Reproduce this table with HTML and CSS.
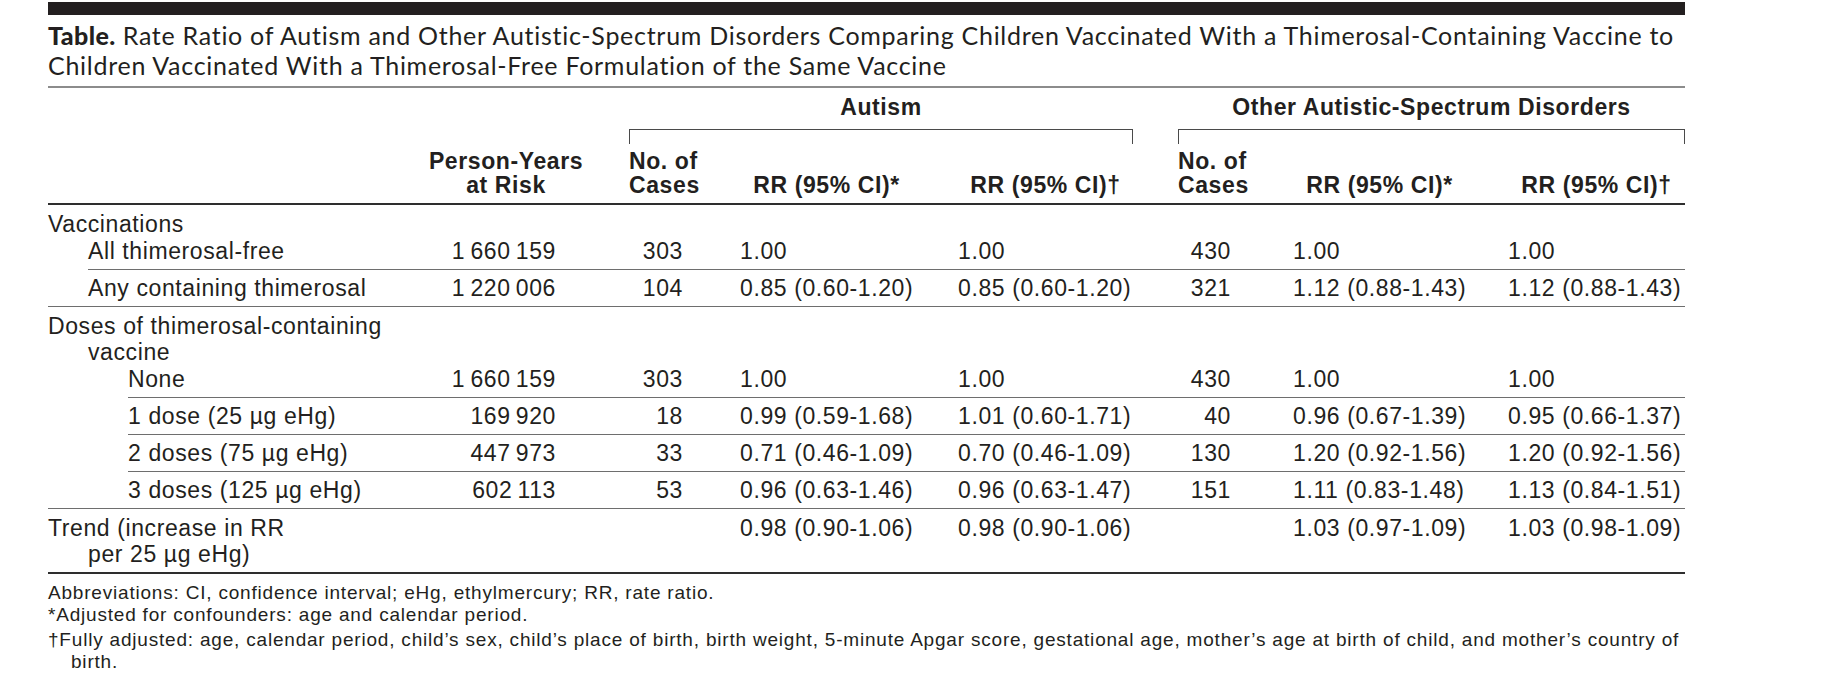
FILE: index.html
```html
<!DOCTYPE html>
<html lang="en">
<head>
<meta charset="utf-8">
<title>Table</title>
<link rel="stylesheet" href="styles.css">
</head>
<body>
<div class="page">
  <div class="topbar"></div>
  <div class="caption"><span class="cap-line"><b>Table.</b> Rate Ratio of Autism and Other Autistic-Spectrum Disorders Comparing Children Vaccinated With a Thimerosal-Containing Vaccine to</span><span class="cap-line">Children Vaccinated With a Thimerosal-Free Formulation of the Same Vaccine</span></div>
  <table class="data">
    <colgroup>
      <col class="w1"><col class="w2"><col class="w3"><col class="w4"><col class="w5"><col class="w6"><col class="w7"><col class="w8">
    </colgroup>
    <thead>
      <tr class="grp-row">
        <th></th><th></th>
        <th colspan="3" class="grp"><div class="grp-label">Autism</div><div class="bracket"></div></th>
        <th colspan="3" class="grp grp2"><div class="grp-label">Other Autistic-Spectrum Disorders</div><div class="bracket"></div></th>
      </tr>
      <tr class="col-row">
        <th class="c1"></th>
        <th class="c2 hc">Person-Years<br>at Risk</th>
        <th class="c3 hl">No. of<br>Cases</th>
        <th class="c4 hc">RR (95% CI)*</th>
        <th class="c5 hc">RR (95% CI)†</th>
        <th class="c6 hl">No. of<br>Cases</th>
        <th class="c7 hc">RR (95% CI)*</th>
        <th class="c8 hc">RR (95% CI)†</th>
      </tr>
    </thead>
    <tbody>
      <tr class="sec">
        <td class="c1 l0">Vaccinations</td><td></td><td></td><td></td><td></td><td></td><td></td><td></td>
      </tr>
      <tr class="after-sec rule-i1">
        <td class="c1 l1">All thimerosal-free</td>
        <td class="c2 num">1&#8201;660&#8201;159</td><td class="c3 num">303</td>
        <td class="c4">1.00</td><td class="c5">1.00</td>
        <td class="c6 num">430</td><td class="c7">1.00</td><td class="c8">1.00</td>
      </tr>
      <tr class="rule-full">
        <td class="c1 l1">Any containing thimerosal</td>
        <td class="c2 num">1&#8201;220&#8201;006</td><td class="c3 num">104</td>
        <td class="c4">0.85 (0.60-1.20)</td><td class="c5">0.85 (0.60-1.20)</td>
        <td class="c6 num">321</td><td class="c7">1.12 (0.88-1.43)</td><td class="c8">1.12 (0.88-1.43)</td>
      </tr>
      <tr class="sec">
        <td class="c1 l0 hang">Doses of thimerosal-containing<br>vaccine</td><td></td><td></td><td></td><td></td><td></td><td></td><td></td>
      </tr>
      <tr class="after-sec rule-i2">
        <td class="c1 l2">None</td>
        <td class="c2 num">1&#8201;660&#8201;159</td><td class="c3 num">303</td>
        <td class="c4">1.00</td><td class="c5">1.00</td>
        <td class="c6 num">430</td><td class="c7">1.00</td><td class="c8">1.00</td>
      </tr>
      <tr class="rule-i2">
        <td class="c1 l2">1 dose (25 µg eHg)</td>
        <td class="c2 num">169&#8201;920</td><td class="c3 num">18</td>
        <td class="c4">0.99 (0.59-1.68)</td><td class="c5">1.01 (0.60-1.71)</td>
        <td class="c6 num">40</td><td class="c7">0.96 (0.67-1.39)</td><td class="c8">0.95 (0.66-1.37)</td>
      </tr>
      <tr class="rule-i2">
        <td class="c1 l2">2 doses (75 µg eHg)</td>
        <td class="c2 num">447&#8201;973</td><td class="c3 num">33</td>
        <td class="c4">0.71 (0.46-1.09)</td><td class="c5">0.70 (0.46-1.09)</td>
        <td class="c6 num">130</td><td class="c7">1.20 (0.92-1.56)</td><td class="c8">1.20 (0.92-1.56)</td>
      </tr>
      <tr class="rule-full">
        <td class="c1 l2">3 doses (125 µg eHg)</td>
        <td class="c2 num">602&#8201;113</td><td class="c3 num">53</td>
        <td class="c4">0.96 (0.63-1.46)</td><td class="c5">0.96 (0.63-1.47)</td>
        <td class="c6 num">151</td><td class="c7">1.11 (0.83-1.48)</td><td class="c8">1.13 (0.84-1.51)</td>
      </tr>
      <tr class="rule-end trend">
        <td class="c1 l0 hang">Trend (increase in RR<br>per 25 µg eHg)</td>
        <td class="c2 num"></td><td class="c3 num"></td>
        <td class="c4">0.98 (0.90-1.06)</td><td class="c5">0.98 (0.90-1.06)</td>
        <td class="c6 num"></td><td class="c7">1.03 (0.97-1.09)</td><td class="c8">1.03 (0.98-1.09)</td>
      </tr>
    </tbody>
  </table>
  <div class="notes">
    <p class="note first">Abbreviations: CI, confidence interval; eHg, ethylmercury; RR, rate ratio.</p>
    <p class="note">*Adjusted for confounders: age and calendar period.</p>
    <p class="note sep">†Fully adjusted: age, calendar period, child’s sex, child’s place of birth, birth weight, 5-minute Apgar score, gestational age, mother’s age at birth of child, and mother’s country of<br>birth.</p>
  </div>
</div>
</body>
</html>
```

FILE: styles.css
```css
html, body {
  margin: 0;
  padding: 0;
  background: #ffffff;
}

.page {
  width: 1637px;
  padding: 2px 0 0 48px;
  color: #231f20;
}

.topbar {
  height: 13px;
  background: #231f20;
}

.caption {
  margin-top: 5px;
  padding-bottom: 6px;
  border-bottom: 2px solid #8c8c8c;
  font-family: Lato, "Open Sans", sans-serif;
  font-size: 25px;
  line-height: 30px;
  letter-spacing: 0.72px;
  white-space: nowrap;
}

.cap-line {
  display: block;
  height: 30px;
}

.caption b {
  font-weight: 900;
  letter-spacing: 0.4px;
}

.data {
  width: 1637px;
  table-layout: fixed;
  border-collapse: separate;
  border-spacing: 0;
  font-family: "Liberation Sans", Arial, sans-serif;
  font-size: 23px;
  letter-spacing: 0.6px;
}

.w1 { width: 372px; }
.w2 { width: 172px; }
.w3 { width: 130px; }
.w4 { width: 218px; }
.w5 { width: 201px; }
.w6 { width: 129px; }
.w7 { width: 220px; }
.w8 { width: 195px; }

th, td {
  padding: 0;
  text-align: left;
  vertical-align: top;
  white-space: nowrap;
}

th {
  font-weight: 700;
}

/* group header row */
.grp {
  padding: 6px 8px 0 37px;
  text-align: center;
}

.grp2 {
  padding-right: 0;
}

.grp-label {
  line-height: 26px;
}

.bracket {
  margin-top: 9px;
  height: 14px;
  border-top: 1px solid #4a4a4a;
  border-left: 1px solid #4a4a4a;
  border-right: 1px solid #4a4a4a;
}

/* column header row */
.col-row th {
  vertical-align: bottom;
  padding-top: 5px;
  padding-bottom: 6px;
  line-height: 24px;
  border-bottom: 2px solid #2e2e2e;
}

.hc { text-align: center; }
.hl { text-align: left; }

/* column paddings */
.c1 { padding-left: 0; }
.c2 { padding-right: 0; }
.c3 { padding-left: 37px; padding-right: 39px; }
.c4 { padding-left: 18px; padding-right: 27px; }
.c5 { padding-left: 18px; padding-right: 8px; }
.c6 { padding-left: 37px; padding-right: 39px; }
.c7 { padding-left: 23px; padding-right: 24px; }
.c8 { padding-left: 18px; padding-right: 0; }

td.c2 { padding-right: 36px; }
.num { text-align: right; }
th.c3, th.c6 { text-align: left; }

/* body rows */
tbody td {
  line-height: 26px;
  padding-top: 5px;
  padding-bottom: 5px;
}

tr.sec td {
  padding-top: 6px;
  padding-bottom: 0;
}

tr.after-sec td {
  padding-top: 1px;
}

.l0 { padding-left: 0; }
.l1 { padding-left: 40px; }
.l2 { padding-left: 80px; }

.hang {
  padding-left: 40px;
  text-indent: -40px;
}

tr.rule-full td {
  border-bottom: 1px solid #6e6e6e;
}

tr.rule-i1 td:not(:first-child),
tr.rule-i2 td:not(:first-child) {
  border-bottom: 1px solid #6e6e6e;
}

tr.rule-i1 td:first-child,
tr.rule-i2 td:first-child {
  padding-bottom: 6px;
  background-image: linear-gradient(#6e6e6e, #6e6e6e);
  background-repeat: no-repeat;
  background-position: right bottom;
}

tr.rule-i1 td:first-child {
  background-size: calc(100% - 40px) 1px;
}

tr.rule-i2 td:first-child {
  background-size: calc(100% - 80px) 1px;
}

tr.trend td {
  padding-top: 6px;
}

tr.rule-end td {
  border-bottom: 2px solid #2e2e2e;
}

/* footnotes */
.notes {
  font-family: "Liberation Sans", Arial, sans-serif;
  font-size: 19px;
  line-height: 22px;
  letter-spacing: 0.8px;
  padding-top: 8px;
}

.note {
  margin: 0;
  white-space: nowrap;
}

.note.sep {
  margin-top: 3px;
  padding-left: 23px;
  text-indent: -23px;
}
```
